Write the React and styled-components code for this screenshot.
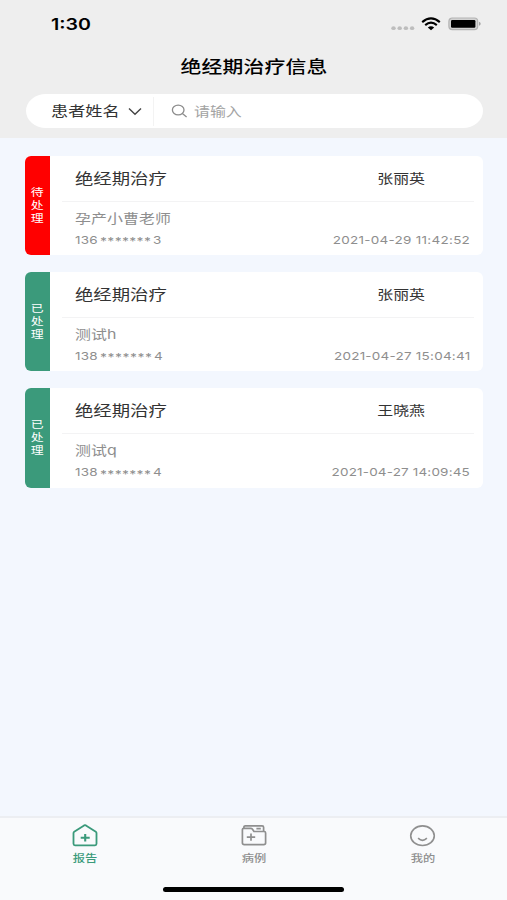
import React from "react"
import styled, { createGlobalStyle } from "styled-components"

const GlobalStyle = createGlobalStyle`
  * {
    box-sizing: border-box;
  }
  body {
    margin: 0;
    background: #f3f7fe;
    font-family: Inter, "Noto Sans CJK SC", sans-serif;
  }
`

const ScreenStyles = styled.div`
  width: 507px;
  height: 900px;
  display: flex;
  flex-direction: column;
  overflow: hidden;
  background: #f3f7fe;
`

// Wide lettering: glyphs are stretched sideways from one edge
const Text = styled.span`
  display: block;
  white-space: nowrap;
  font-size: ${({ $size }) => $size}px;
  line-height: ${({ $line }) => $line || 20}px;
  font-weight: ${({ $weight }) => $weight || 400};
  color: ${({ $color }) => $color || "#333"};
  letter-spacing: ${({ $spacing }) => $spacing || 0}px;
  transform: scaleX(${({ $stretch }) => $stretch || 1.2246});
  transform-origin: ${({ $origin }) => $origin || "left"} center;
`

const HeaderStyles = styled.header`
  height: 138px;
  flex: none;
  background: #eeeeee;
`

const StatusBarStyles = styled.div`
  height: 47px;
  padding: 0 26px 0 51px;
  display: flex;
  align-items: center;
  justify-content: space-between;
`

const StatusIcons = styled.div`
  display: flex;
  align-items: center;

  svg {
    display: block;
  }
`

const IconGap = styled.div`
  width: ${({ $width }) => $width}px;
`

const TitleStyles = styled.h1`
  margin: 0;
  height: 47px;
  padding: 10px 0 0 1px;
  display: flex;
  justify-content: center;
`

const SearchStyles = styled.div`
  height: 34px;
  margin: 0 24.5px 0 25.5px;
  border-radius: 20px / 17px;
  background: #fff;
  display: flex;
  align-items: center;
`

const FilterStyles = styled.div`
  width: 128px;
  height: 29px;
  padding: 0 11px 0 25.4px;
  border-right: 1px solid #f3f3f3;
  display: flex;
  align-items: center;
  justify-content: space-between;
`

const InputStyles = styled.div`
  padding-left: 17px;
  display: flex;
  align-items: center;
  gap: 6px;
`

const ListStyles = styled.main`
  flex: 1;
  padding: 17.5px 24.5px 0 25px;
  display: flex;
  flex-direction: column;
  gap: 17px;
`

const CardStyles = styled.article`
  height: 99.4px;
  display: flex;
  border-radius: 6px;
  overflow: hidden;
  background: #fff;
`

const TagStyles = styled.div`
  width: 25px;
  flex: none;
  display: flex;
  flex-direction: column;
  align-items: center;
  justify-content: center;
  background: ${({ $done }) => ($done ? "#3b9a7b" : "#ff0000")};
`

const CardBody = styled.div`
  flex: 1;
  padding: 0 9px 0 12px;
`

const CardHead = styled.div`
  height: 46px;
  padding: 1px 48.5px 0 12.5px;
  border-bottom: 1px solid #f3f3f4;
  display: flex;
  align-items: center;
  justify-content: space-between;
`

const DoctorStyles = styled.div`
  padding-bottom: 2px;
`

const CardInfo = styled.div`
  padding: 5px 3.5px 0 12.5px;
`

const CardRow = styled.div`
  height: 22px;
  display: flex;
  align-items: center;
  justify-content: space-between;
`

const PhoneStyles = styled.div`
  display: flex;
  align-items: center;
`

const PhonePart = styled.div`
  width: ${({ $width }) => $width}px;
  padding-top: ${({ $drop }) => $drop || 0}px;
`

const TabBarStyles = styled.nav`
  height: 84px;
  flex: none;
  border-top: 2px solid #eceef2;
  background: #f9fafc;
  display: flex;
  flex-direction: column;
  align-items: center;
`

const TabsStyles = styled.div`
  width: 100%;
  height: 69px;
  display: flex;
`

const TabStyles = styled.div`
  flex: 1;
  padding-top: 5px;
  display: flex;
  flex-direction: column;
  align-items: center;
  color: ${({ $active }) => ($active ? "#3b9a7b" : "#8f8f8f")};

  svg {
    display: block;
    fill: none;
    stroke: currentColor;
  }
`

const HomeIndicator = styled.div`
  width: 181px;
  height: 5px;
  border-radius: 3px;
  background: #000;
`

const SignalIcon = () => (
  <svg width="24" height="22" viewBox="0 0 24 22" fill="#bdbdbd">
    <ellipse cx="2.5" cy="15.2" rx="2.2" ry="1.9" />
    <ellipse cx="8.7" cy="15.2" rx="2.2" ry="1.9" />
    <ellipse cx="14.9" cy="15.2" rx="2.2" ry="1.9" />
    <ellipse cx="21.1" cy="15.2" rx="2.2" ry="1.9" />
  </svg>
)

const WifiIcon = () => (
  <svg width="20" height="14" viewBox="0 0 20 14" fill="none" stroke="#000">
    <path d="M1.2 5.1Q10-2.2 18.8 5.1" strokeWidth="2.1" />
    <path d="M4.2 8.1Q10 3.3 15.8 8.1" strokeWidth="2.1" />
    <path d="M6.8 10.5Q10 7.8 13.2 10.5L10 13.2Z" fill="#000" stroke="none" />
  </svg>
)

const BatteryIcon = () => (
  <svg width="33" height="14" viewBox="0 0 33 14">
    <rect x="0.9" y="1" width="28.8" height="11.6" rx="3.4" fill="#d2d2d2" stroke="#b3b3b3" strokeWidth="1.2" />
    <rect x="3" y="3" width="24.4" height="7.8" rx="1.2" fill="#000" />
    <path d="M31 4.8Q32.7 5.4 32.7 6.8T31 8.8Z" fill="#a5a5a5" />
  </svg>
)

const ChevronIcon = () => (
  <svg width="14" height="9" viewBox="0 0 14 9" fill="none" stroke="#444" strokeWidth="1.4">
    <path d="M1 1.5L7 7.2L13 1.5" />
  </svg>
)

const SearchIcon = () => (
  <svg width="17" height="14" viewBox="0 0 17 14" fill="none" stroke="#8c8c8c" strokeWidth="1.3">
    <ellipse cx="7.2" cy="6" rx="5.8" ry="4.9" />
    <path d="M11.4 9.5L15.6 12.9" />
  </svg>
)

const ReportIcon = () => (
  <svg width="28" height="25" viewBox="0 0 28 25" strokeWidth="1.8" strokeLinejoin="round">
    <path d="M2.5 10.1V20.8Q2.5 22.3 4 22.3H24Q25.5 22.3 25.5 20.8V10.1Q25.5 9.3 24.8 8.8L14.9 2.4Q14 1.9 13.1 2.4L3.2 8.8Q2.5 9.3 2.5 10.1Z" />
    <path d="M9.7 14.7H18.7M14.2 10.9V18.5" strokeWidth="2.1" />
  </svg>
)

const CaseIcon = () => (
  <svg width="28" height="25" viewBox="0 0 28 25" strokeWidth="1.7" strokeLinejoin="round">
    <path d="M2.4 20V6.5Q2.4 5.3 3.8 5.3H10.8Q11.7 5.3 12.3 6.1L14 8.5H24.2Q25.6 8.5 25.6 9.9V20Q25.6 21.6 23.8 21.6H4.2Q2.4 21.6 2.4 20Z" />
    <path d="M3.9 5V4Q3.9 2.8 5.3 2.8H22.1Q23.6 2.8 23.6 4.2V8.3M16.4 5.7H20.8" />
    <path d="M6.8 14.2H15.2M11 10.6V17.8" />
  </svg>
)

const MineIcon = () => (
  <svg width="28" height="25" viewBox="0 0 28 25" strokeWidth="1.6">
    <ellipse cx="13.5" cy="12.7" rx="11.8" ry="9.8" />
    <path d="M9.1 15.2Q13.5 19.4 17.9 15.2" />
  </svg>
)

const reports = [
  {
    status: "待处理",
    doctor: "张丽英",
    patient: "孕产小曹老师",
    phone: ["136", "3"],
    starsWidth: 53,
    time: "2021-04-29 11:42:52",
    timeSpacing: 0.23,
  },
  {
    status: "已处理",
    done: true,
    doctor: "张丽英",
    patient: "测试h",
    phone: ["138", "4"],
    starsWidth: 54.5,
    time: "2021-04-27 15:04:41",
    timeSpacing: 0.2,
  },
  {
    status: "已处理",
    done: true,
    doctor: "王晓燕",
    patient: "测试q",
    phone: ["138", "4"],
    starsWidth: 53,
    time: "2021-04-27 14:09:45",
    timeSpacing: 0.15,
  },
]

const tabs = [
  { label: "报告", Icon: ReportIcon, active: true },
  { label: "病例", Icon: CaseIcon },
  { label: "我的", Icon: MineIcon },
]

const ReportCard = ({
  status,
  done,
  doctor,
  patient,
  phone,
  starsWidth,
  time,
  timeSpacing,
}) => (
  <CardStyles>
    <TagStyles $done={done}>
      {status.split("").map((char, i) => (
        <Text key={i} $size={10.5} $line={13} $color="#fff" $origin="center">
          {char}
        </Text>
      ))}
    </TagStyles>
    <CardBody>
      <CardHead>
        <Text $size={15}>绝经期治疗</Text>
        <DoctorStyles>
          <Text $size={13} $origin="right">
            {doctor}
          </Text>
        </DoctorStyles>
      </CardHead>
      <CardInfo>
        <CardRow>
          <Text $size={13} $color="#8e8e8e" $spacing={0.05}>
            {patient}
          </Text>
        </CardRow>
        <CardRow>
          <PhoneStyles>
            <PhonePart $width={25}>
              <Text $size={11} $color="#8e8e8e" $spacing={0.15}>
                {phone[0]}
              </Text>
            </PhonePart>
            <PhonePart $width={starsWidth} $drop={3}>
              <Text
                $size={11}
                $color="#8e8e8e"
                $weight={500}
                $spacing={starsWidth > 54 ? 0.4 : 0.25}
              >
                *******
              </Text>
            </PhonePart>
            <Text $size={11} $color="#8e8e8e">
              {phone[1]}
            </Text>
          </PhoneStyles>
          <Text
            $size={11}
            $color="#8e8e8e"
            $spacing={timeSpacing}
            $origin="right"
          >
            {time}
          </Text>
        </CardRow>
      </CardInfo>
    </CardBody>
  </CardStyles>
)

const App = () => (
  <>
    <GlobalStyle />
    <ScreenStyles>
      <HeaderStyles>
        <StatusBarStyles>
          <Text $size={16} $weight={600} $color="#000">
            1:30
          </Text>
          <StatusIcons>
            <SignalIcon />
            <IconGap $width={6} />
            <WifiIcon />
            <IconGap $width={7} />
            <BatteryIcon />
          </StatusIcons>
        </StatusBarStyles>
        <TitleStyles>
          <Text
            $size={17}
            $weight={500}
            $color="#000"
            $spacing={0.15}
            $origin="center"
          >
            绝经期治疗信息
          </Text>
        </TitleStyles>
        <SearchStyles>
          <FilterStyles>
            <Text $size={14}>患者姓名</Text>
            <ChevronIcon />
          </FilterStyles>
          <InputStyles>
            <SearchIcon />
            <Text $size={13} $color="#a3a3a3">
              请输入
            </Text>
          </InputStyles>
        </SearchStyles>
      </HeaderStyles>
      <ListStyles>
        {reports.map(report => (
          <ReportCard key={report.time} {...report} />
        ))}
      </ListStyles>
      <TabBarStyles>
        <TabsStyles>
          {tabs.map(({ label, Icon, active }) => (
            <TabStyles key={label} $active={active}>
              <Icon />
              <Text $size={10} $weight={500} $color="inherit" $origin="center">
                {label}
              </Text>
            </TabStyles>
          ))}
        </TabsStyles>
        <HomeIndicator />
      </TabBarStyles>
    </ScreenStyles>
  </>
)

export default App
